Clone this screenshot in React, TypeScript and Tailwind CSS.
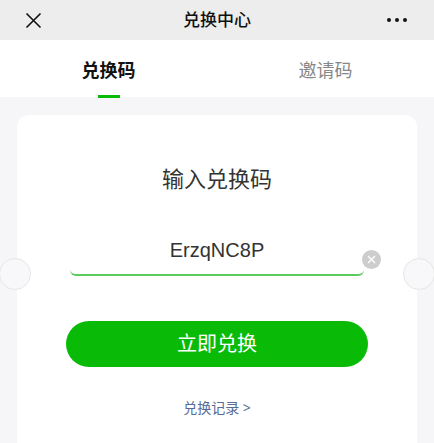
import { useState } from "react";

const font = {
  fontFamily: '"Noto Sans", "Noto Sans CJK SC", sans-serif',
};

function CloseIcon() {
  return (
    <svg width="17" height="17" viewBox="0 0 17 17" fill="none">
      <path d="M1.5 1.5 L15.5 15.5 M15.5 1.5 L1.5 15.5" stroke="#111" strokeWidth="1.6" />
    </svg>
  );
}

export default function App() {
  const [tab, setTab] = useState(0);
  const [code, setCode] = useState("ErzqNC8P");

  return (
    <div style={font} className="h-[443px] w-[434px] overflow-hidden bg-[#f6f6f8]">
      {/* 顶部导航 */}
      <header className="flex h-10 items-center justify-between bg-[#ededed] px-[25px]">
        <button className="flex h-6 w-6 items-center">
          <CloseIcon />
        </button>
        <h1 className="text-[17px] font-medium text-[#111]">兑换中心</h1>
        <div className="flex w-6 items-center justify-end gap-[3.5px] pr-0.5">
          <span className="h-[4.5px] w-[4.5px] rounded-full bg-[#111]" />
          <span className="h-[4.5px] w-[4.5px] rounded-full bg-[#111]" />
          <span className="h-[4.5px] w-[4.5px] rounded-full bg-[#111]" />
        </div>
      </header>

      {/* 标签 */}
      <nav className="flex h-[57px] bg-white">
        {["兑换码", "邀请码"].map((t, i) => (
          <button
            key={t}
            onClick={() => setTab(i)}
            className="relative flex flex-1 items-start justify-center pt-[18px]"
          >
            <span
              className={
                tab === i
                  ? "text-[18px] font-bold leading-[24px] text-[#111]"
                  : "text-[18px] leading-[24px] text-[#888]"
              }
            >
              {t}
            </span>
            {tab === i && (
              <span className="absolute bottom-[-0.5px] left-1/2 h-[3px] w-[22px] -translate-x-1/2 bg-[#09bb07]" />
            )}
          </button>
        ))}
      </nav>

      {/* 卡片 */}
      <div className="relative mx-[17px] mt-[18px] flex h-[340px] flex-col items-center rounded-xl bg-white pt-[48px]">
        <span className="absolute left-[-18px] top-[143px] h-8 w-8 rounded-full border border-[#e6e6e6] bg-[#f8f8fa]" />
        <span className="absolute right-[-18px] top-[143px] h-8 w-8 rounded-full border border-[#e6e6e6] bg-[#f8f8fa]" />

        <h2 className="text-[22px] leading-[30px] text-[#333]">输入兑换码</h2>

        <div className="relative mt-[33px] w-[294px] rounded-b-md border-b-2 border-[#5ccd5c]">
          <input
            value={code}
            onChange={(e) => setCode(e.target.value)}
            style={{ fontFamily: '"Liberation Sans", "Noto Sans CJK SC", sans-serif' }}
            className="h-[48px] w-full bg-transparent text-center text-[20px] text-[#333] outline-none"
          />
          <button
            onClick={() => setCode("")}
            className="absolute right-[-17px] top-[24px] flex h-[19px] w-[19px] items-center justify-center rounded-full bg-[#cdcdcd]"
          >
            <svg width="9" height="9" viewBox="0 0 9 9">
              <path d="M1 1 L8 8 M8 1 L1 8" stroke="#fff" strokeWidth="1.4" />
            </svg>
          </button>
        </div>

        <button className="mt-[45px] h-[46px] w-[302px] rounded-full bg-[#09bb07] text-[20px] text-white">
          立即兑换
        </button>

        <a className="mt-[30px] text-[14px] text-[#576b95]">兑换记录 &gt;</a>
      </div>
    </div>
  );
}
